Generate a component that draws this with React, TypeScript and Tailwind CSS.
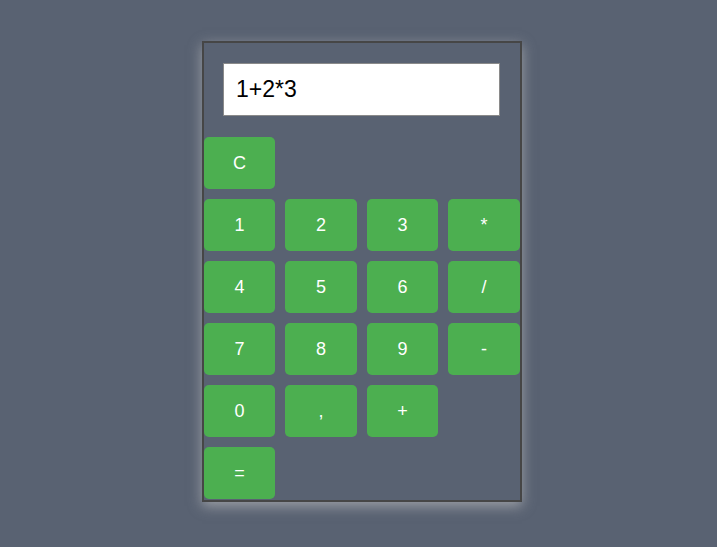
const rows: string[][] = [
  ["C"],
  ["1", "2", "3", "*"],
  ["4", "5", "6", "/"],
  ["7", "8", "9", "-"],
  ["0", ",", "+"],
  ["="],
];

export default function App() {
  return (
    <div className="w-[717px] h-[547px] bg-[#596272] pt-[41px] pl-[202px] font-['Liberation_Sans',Arial,sans-serif]">
      <div className="w-[320px] h-[461px] border-2 border-[#464646] bg-[#596272] shadow-[0_4px_12px_rgba(200,200,200,0.6)]">
        <div className="pt-[20px] pl-[19px] pb-[21px]">
          <div className="w-[277px] h-[53px] bg-white border border-[#8a8a8a] flex items-center pl-[12px] text-[23px] text-black">
            1+2*3
          </div>
        </div>
        <div className="flex flex-col gap-[10px]">
          {rows.map((row, i) => (
            <div key={i} className="grid grid-cols-[71px_72px_71px_72px] gap-x-[10px]">
              {row.map((k) => (
                <button
                  key={k}
                  className="h-[52px] rounded-[5px] bg-[#4caf50] text-white text-[18px] flex items-center justify-center"
                >
                  {k}
                </button>
              ))}
            </div>
          ))}
        </div>
      </div>
    </div>
  );
}
